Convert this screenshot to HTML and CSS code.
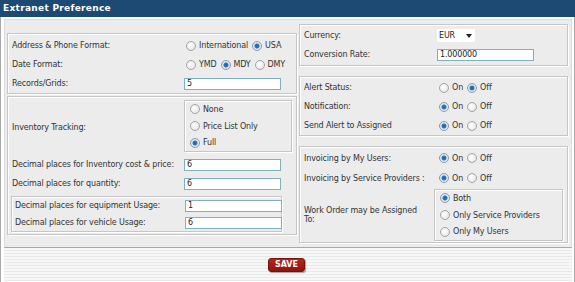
FILE: index.html
```html
<!DOCTYPE html>
<html lang="en">
<head>
    <meta charset="UTF-8">
    <title>Extranet Preference</title>
    <link rel="stylesheet" href="styles.css">
</head>
<body>

<div class="page">
    <div class="title-bar">Extranet Preference</div>

    <div class="frame">
        <div class="content">

            <!-- left column -->
            <div class="col col-left">
                <div class="box box-top">
                    <div class="row">
                        <span class="label">Address &amp; Phone Format:</span>
                        <label class="opt"><input type="radio" name="addr"> International</label>
                        <label class="opt"><input type="radio" name="addr" checked> USA</label>
                    </div>
                    <div class="row">
                        <span class="label">Date Format:</span>
                        <label class="opt"><input type="radio" name="date"> YMD</label>
                        <label class="opt"><input type="radio" name="date" checked> MDY</label>
                        <label class="opt"><input type="radio" name="date"> DMY</label>
                    </div>
                    <div class="row">
                        <span class="label">Records/Grids:</span>
                        <input class="field" type="text" value="5">
                    </div>
                </div>

                <div class="box box-inventory">
                    <div class="row row-group">
                        <span class="label">Inventory Tracking:</span>
                        <div class="group group-inv">
                            <label class="opt"><input type="radio" name="inv"> None</label>
                            <label class="opt"><input type="radio" name="inv"> Price List Only</label>
                            <label class="opt"><input type="radio" name="inv" checked> Full</label>
                        </div>
                    </div>
                    <div class="row">
                        <span class="label">Decimal places for Inventory cost &amp; price:</span>
                        <input class="field" type="text" value="6">
                    </div>
                    <div class="row">
                        <span class="label">Decimal places for quantity:</span>
                        <input class="field" type="text" value="6">
                    </div>
                    <div class="box box-inner">
                        <div class="row row-small">
                            <span class="label">Decimal places for equipment Usage:</span>
                            <input class="field" type="text" value="1">
                        </div>
                        <div class="row row-small">
                            <span class="label">Decimal places for vehicle Usage:</span>
                            <input class="field" type="text" value="6">
                        </div>
                    </div>
                </div>
            </div>

            <!-- right column -->
            <div class="col col-right">
                <div class="box box-currency">
                    <div class="row">
                        <span class="label">Currency:</span>
                        <div class="select">EUR <span class="caret"></span></div>
                    </div>
                    <div class="row">
                        <span class="label">Conversion Rate:</span>
                        <input class="field" type="text" value="1.000000">
                    </div>
                </div>

                <div class="box box-alert">
                    <div class="row">
                        <span class="label">Alert Status:</span>
                        <label class="opt"><input type="radio" name="alert"> On</label>
                        <label class="opt"><input type="radio" name="alert" checked> Off</label>
                    </div>
                    <div class="row">
                        <span class="label">Notification:</span>
                        <label class="opt"><input type="radio" name="notif" checked> On</label>
                        <label class="opt"><input type="radio" name="notif"> Off</label>
                    </div>
                    <div class="row">
                        <span class="label">Send Alert to Assigned</span>
                        <label class="opt"><input type="radio" name="send" checked> On</label>
                        <label class="opt"><input type="radio" name="send"> Off</label>
                    </div>
                </div>

                <div class="box box-invoice">
                    <div class="row row-tall">
                        <span class="label">Invoicing by My Users:</span>
                        <label class="opt"><input type="radio" name="myusers" checked> On</label>
                        <label class="opt"><input type="radio" name="myusers"> Off</label>
                    </div>
                    <div class="row row-tall">
                        <span class="label">Invoicing by Service Providers :</span>
                        <label class="opt"><input type="radio" name="sp" checked> On</label>
                        <label class="opt"><input type="radio" name="sp"> Off</label>
                    </div>
                    <div class="row row-group">
                        <span class="label label-wrap">Work Order may be Assigned To:</span>
                        <div class="group group-wo">
                            <label class="opt"><input type="radio" name="wo" checked> Both</label>
                            <label class="opt"><input type="radio" name="wo"> Only Service Providers</label>
                            <label class="opt"><input type="radio" name="wo"> Only My Users</label>
                        </div>
                    </div>
                </div>
            </div>

        </div>

        <div class="footer">
            <button class="save">SAVE</button>
        </div>
    </div>
</div>

</body>
</html>
```

FILE: styles.css
```css
body {
    margin: 0;
    padding: 0;
    background: #fff;
    font-family: "DejaVu Sans", Verdana, sans-serif;
    font-size: 8px;
    letter-spacing: -0.15px;
    color: #333;
}

.page {
    width: 575px;
    height: 282px;
    overflow: hidden;
}

.title-bar {
    height: 17px;
    line-height: 16px;
    padding-left: 3px;
    background-color: #1d4a73;
    color: #fff;
    font-weight: bold;
    font-size: 9px;
    letter-spacing: 0.3px;
}

.frame {
    height: 264px;
    border-left: 1px solid #a9a9a9;
    border-right: 1px solid #a9a9a9;
    border-bottom: 1px solid #a9a9a9;
    padding: 2px 2px 0 3px;
}

.content {
    display: flex;
    align-items: flex-start;
    height: 229px;
    box-sizing: border-box;
    background-color: #ececec;
    border: 1px solid #dcdcdc;
    border-bottom: 1px solid #a9a9a9;
    padding: 4px 3px 0 2px;
}

.col {
    display: flex;
    flex-direction: column;
}

.col-left {
    width: 290px;
    margin-top: 9px;
    gap: 2px;
}

.col-right {
    width: 269px;
    margin-left: 2px;
    gap: 10px;
}

.box {
    border: 1px solid #c6c6c6;
    box-shadow: inset 1px 1px 0 #fff, 1px 1px 0 #fff;
    padding: 1px 4px 0 4px;
}

.box-top {
    padding: 2px 4px 0 4px;
}

.box-inventory {
    padding: 3px 4px 2px 4px;
}

.box-currency {
    padding: 1px 4px 1px 4px;
}

.box-invoice {
    padding: 1px 4px 1px 4px;
}

.box-inner {
    margin: 3px 10px 0 -1px;
    padding: 0 3px;
}

.row {
    display: flex;
    align-items: center;
    height: 19px;
}

.row-tall {
    height: 20px;
}

.row-small {
    height: 17px;
}

.row-group {
    height: auto;
}

.col-left .label {
    width: 172px;
    flex-shrink: 0;
}

.col-left .box-inner .label {
    width: 170px;
}

.col-right .label {
    width: 133px;
    flex-shrink: 0;
}

.label-wrap {
    padding-right: 8px;
    box-sizing: border-box;
}

.opt {
    display: flex;
    align-items: center;
    margin-right: 2px;
}

.opt input {
    -webkit-appearance: none;
    appearance: none;
    width: 10px;
    height: 10px;
    margin: 0 3px 0 2px;
    border: 1px solid #a4a4a4;
    border-radius: 50%;
    background: radial-gradient(circle at 40% 40%, #fff 0, #e6e6e6 80%);
}

.opt input:checked {
    background: radial-gradient(circle, #1d5fa6 0, #2e7ac4 2px, #dde6ee 3px, #f4f4f4 100%);
    border-color: #8a9aa8;
}

.group {
    display: flex;
    flex-direction: column;
    border: 1px solid #c6c6c6;
    box-shadow: inset 1px 1px 0 #fff, 1px 1px 0 #fff;
    padding: 0 3px;
}

.group .opt {
    height: 16.7px;
}

.group-inv {
    width: 106px;
    margin-bottom: 3px;
}

.group-wo {
    width: 126px;
    margin: 1px 0 0 -3px;
}

.field {
    width: 97px;
    height: 12px;
    box-sizing: border-box;
    border: 1px solid #7fb0be;
    padding: 0 2px;
    font-family: inherit;
    font-size: 8px;
    letter-spacing: inherit;
    color: #222;
    background: #fff;
}

.select {
    display: flex;
    align-items: center;
    justify-content: space-between;
    width: 38px;
    height: 13px;
    box-sizing: border-box;
    padding: 0 3px 0 2px;
    background: #fff;
    color: #222;
}

.caret {
    width: 0;
    height: 0;
    border-left: 3px solid transparent;
    border-right: 3px solid transparent;
    border-top: 4px solid #222;
}

.footer {
    height: 33px;
    display: flex;
    justify-content: center;
    align-items: center;
    background: repeating-linear-gradient(to bottom, #f7f7f7 0, #f7f7f7 2px, #e9e9e9 2px, #e9e9e9 3px);
}

.save {
    width: 37px;
    height: 14px;
    margin-left: -3px;
    padding: 0;
    border: 1px solid #7a0f0a;
    border-radius: 3px;
    background: linear-gradient(to bottom, #b4261b, #8e150e);
    box-shadow: 1px 1px 1px rgba(0, 0, 0, 0.35);
    color: #fff;
    font-family: "DejaVu Sans", Verdana, sans-serif;
    font-weight: bold;
    font-size: 8px;
    cursor: pointer;
}
```
